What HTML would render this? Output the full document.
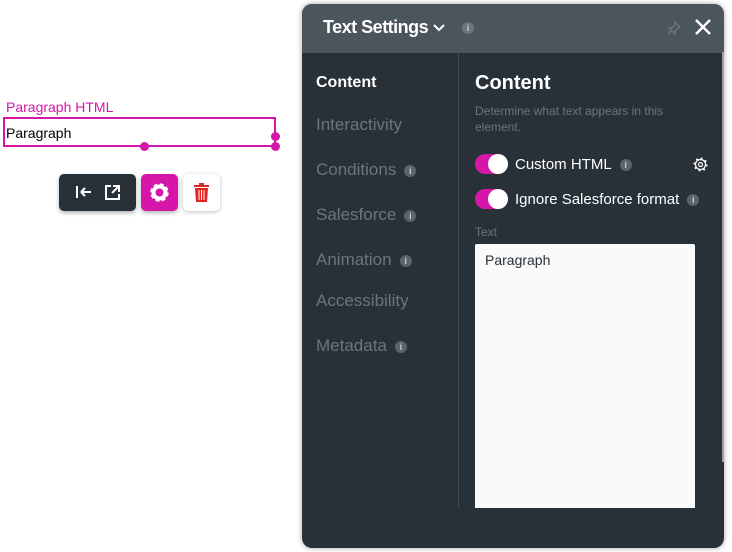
<!DOCTYPE html>
<html><head><style>
*{margin:0;padding:0;box-sizing:border-box}
body{width:732px;height:552px;background:#fff;position:relative;overflow:hidden;font-family:"Liberation Sans",sans-serif}
.a{position:absolute}
.info{display:inline-block;width:12px;height:12px;border-radius:50%;background:#5a646b;color:#c9cdd0;font-size:9px;line-height:12px;text-align:center;font-weight:bold;vertical-align:middle;margin-left:8px}
.nav{position:absolute;left:316px;font-size:17px;color:#6b757c}
.tg{position:absolute;left:475px;width:33px;height:20px;border-radius:10px;background:#d516a8}
.tg::after{content:"";position:absolute;right:0;top:0;width:20px;height:20px;border-radius:50%;background:#fff}
</style></head><body>
<div class="a" style="left:6px;top:99px;color:#d516a8;font-size:14px">Paragraph HTML</div>
<div class="a" style="left:3px;top:117px;width:273px;height:30px;border:2px solid #d516a8"></div>
<div class="a" style="left:6px;top:125px;font-size:14px;color:#000">Paragraph</div>
<div class="a" style="left:271px;top:132px;width:9px;height:9px;border-radius:50%;background:#d516a8"></div>
<div class="a" style="left:271px;top:142px;width:9px;height:9px;border-radius:50%;background:#d516a8"></div>
<div class="a" style="left:140px;top:142px;width:9px;height:9px;border-radius:50%;background:#d516a8"></div>
<div class="a" style="left:59px;top:174px;width:77px;height:37px;border-radius:5px;background:#283138;box-shadow:0 2px 4px rgba(0,0,0,.3)">
<svg width="77" height="37"><g stroke="#fff" stroke-width="2" fill="none"><path d="M18 12v12M22 18h10M22 18l4-4M22 18l4 4"/><path d="M52 12h-5v13h13v-5M54 12h6v6M60 12l-7 7"/></g></svg></div>
<div class="a" style="left:141px;top:174px;width:37px;height:37px;border-radius:5px;background:#d516a8;box-shadow:0 2px 4px rgba(0,0,0,.3)">
<svg width="37" height="37"><g transform="translate(18.5 18.5)"><circle r="6" fill="none" stroke="#fff" stroke-width="4"/><circle r="7.5" fill="none" stroke="#fff" stroke-width="3.5" stroke-dasharray="3.5 2.4"/></g></svg></div>
<div class="a" style="left:183px;top:174px;width:37px;height:37px;border-radius:5px;background:#fff;box-shadow:0 1px 4px rgba(0,0,0,.25)">
<svg width="37" height="37"><g fill="#e02424"><rect x="11" y="11" width="15" height="2"/><rect x="16" y="9" width="5" height="2"/><path d="M12 14h13l-1 14h-11z"/></g><g stroke="#fff" stroke-width="1"><path d="M16 16v10M18.5 16v10M21 16v10"/></g></svg></div>

<div class="a" style="left:302px;top:4px;width:422px;height:544px;border-radius:10px;background:#283138;overflow:hidden;box-shadow:0 0 6px rgba(0,0,0,.35)">
<div class="a" style="left:0;top:0;width:422px;height:49px;background:#4a555c"></div>
<div class="a" style="left:21px;top:13px;color:#fff;font-size:18px;font-weight:bold;letter-spacing:-0.5px">Text Settings</div>
<svg class="a" style="left:131px;top:20px" width="12" height="8"><path d="M1 1l5 5 5-5" stroke="#fff" stroke-width="2" fill="none"/></svg>
<div class="a" style="left:160px;top:15px"><span class="info" style="margin:0;background:#6b757c">i</span></div>
<svg class="a" style="left:364px;top:16px" width="16" height="16"><path d="M9 2l5 5-2 1-3 3 0 3-6-6 3 0 3-3z M5 11l-3 3" stroke="#6b757c" stroke-width="1.5" fill="none"/></svg>
<svg class="a" style="left:392px;top:14px" width="18" height="18"><path d="M2 2l14 14M16 2L2 16" stroke="#fff" stroke-width="2.5"/></svg>
<div class="a" style="left:156px;top:48px;width:1px;height:456px;background:#3f4950"></div>
<div class="a" style="left:420px;top:48px;width:2px;height:410px;background:#9aa0a4"></div>
</div>
<div class="nav" style="top:74px;color:#fff;font-weight:bold;font-size:16px">Content</div>
<div class="nav" style="top:115px">Interactivity</div>
<div class="nav" style="top:160px">Conditions<span class="info">i</span></div>
<div class="nav" style="top:205px">Salesforce<span class="info">i</span></div>
<div class="nav" style="top:250px">Animation<span class="info">i</span></div>
<div class="nav" style="top:291px">Accessibility</div>
<div class="nav" style="top:336px">Metadata<span class="info">i</span></div>
<div class="a" style="left:475px;top:72px;color:#fff;font-size:20px;font-weight:bold">Content</div>
<div class="a" style="left:475px;top:103px;width:215px;color:#6b757c;font-size:12px;line-height:16px">Determine what text appears in this element.</div>
<div class="tg" style="top:154px"></div>
<div class="a" style="left:515px;top:156px;color:#fff;font-size:15px">Custom HTML<span class="info">i</span></div>
<svg class="a" style="left:693px;top:157px" width="15" height="15"><g transform="translate(7.5 7.5)" fill="none" stroke="#fff"><circle r="5" stroke-width="1.2"/><circle r="2" stroke-width="1.2"/><circle r="6" stroke-dasharray="1.8 2.9" stroke-width="2"/></g></svg>
<div class="tg" style="top:189px"></div>
<div class="a" style="left:515px;top:191px;color:#fff;font-size:15px">Ignore Salesforce format<span class="info">i</span></div>
<div class="a" style="left:475px;top:225px;color:#6b757c;font-size:12px">Text</div>
<div class="a" style="left:475px;top:244px;width:220px;height:264px;background:#fafafa;border-radius:2px 2px 0 0"></div>
<div class="a" style="left:485px;top:252px;color:#283138;font-size:14px">Paragraph</div>
</body></html>
